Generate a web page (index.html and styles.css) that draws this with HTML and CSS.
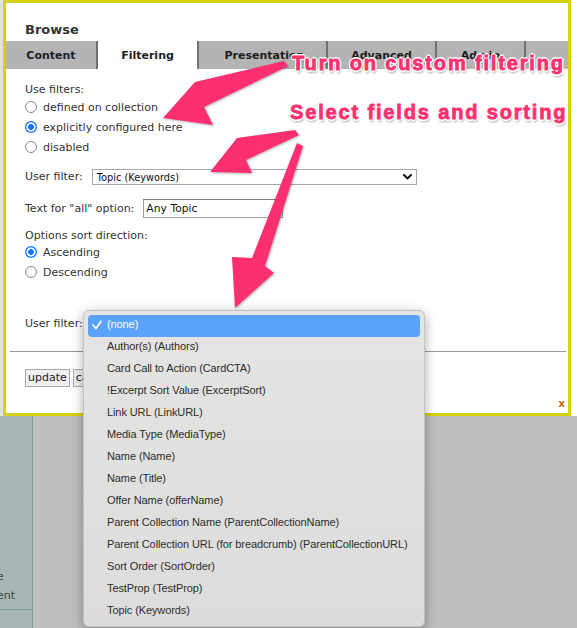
FILE: index.html
```html
<!DOCTYPE html>
<html lang="en">
<head>
<meta charset="utf-8">
<title>Browse – Filtering</title>
<link rel="stylesheet" href="styles.css">
</head>
<body>
<div class="page">
  <aside class="sidebar">
    <ul class="nav">
      <li>e</li>
      <li>ent</li>
    </ul>
    <div class="nav-foot"></div>
  </aside>
  <main class="backdrop"></main>
</div>

<div class="modal">
  <div class="dialog">
    <h1 class="title">Browse</h1>
    <div class="tabs">
      <div class="tab tab-content">Content</div>
      <div class="tab tab-filtering active">Filtering</div>
      <div class="tab tab-presentation">Presentation</div>
      <div class="tab tab-advanced">Advanced</div>
      <div class="tab tab-admin">Admin</div>
    </div>
    <div class="panel">
      <div class="label label-use">Use filters:</div>
      <div class="opt"><span class="radio"></span>defined on collection</div>
      <div class="opt"><span class="radio checked"></span>explicitly configured here</div>
      <div class="opt"><span class="radio"></span>disabled</div>

      <div class="field field-filter">
        <span class="field-label">User filter:</span>
        <div class="select select-wide">
          <span>Topic (Keywords)</span>
          <svg class="chev" width="9" height="6" viewBox="0 0 9 6"><polyline points="1,1 4.5,4.5 8,1" fill="none" stroke="#111" stroke-width="2" stroke-linecap="round" stroke-linejoin="round"/></svg>
        </div>
      </div>

      <div class="field field-all">
        <span class="field-label">Text for "all" option:</span>
        <div class="input">Any Topic</div>
      </div>

      <div class="label label-sort">Options sort direction:</div>
      <div class="opt"><span class="radio checked"></span>Ascending</div>
      <div class="opt"><span class="radio"></span>Descending</div>

      <div class="field field-filter2">
        <span class="field-label">User filter:</span>
        <div class="select select-wide"><span>(none)</span></div>
      </div>
    </div>
    <div class="rule"></div>
    <div class="buttons">
      <button class="btn">update</button>
      <button class="btn">cancel</button>
    </div>
    <div class="close">x</div>
  </div>
</div>

<div class="menu">
  <div class="item selected">
    <svg class="check" width="10" height="10" viewBox="0 0 10 10"><polyline points="1,5 4,8.5 9,1.5" fill="none" stroke="#fff" stroke-width="1.7" stroke-linecap="round" stroke-linejoin="round"/></svg>
    (none)
  </div>
  <div class="item">Author(s) (Authors)</div>
  <div class="item">Card Call to Action (CardCTA)</div>
  <div class="item">!Excerpt Sort Value (ExcerptSort)</div>
  <div class="item">Link URL (LinkURL)</div>
  <div class="item">Media Type (MediaType)</div>
  <div class="item">Name (Name)</div>
  <div class="item">Name (Title)</div>
  <div class="item">Offer Name (offerName)</div>
  <div class="item">Parent Collection Name (ParentCollectionName)</div>
  <div class="item">Parent Collection URL (for breadcrumb) (ParentCollectionURL)</div>
  <div class="item">Sort Order (SortOrder)</div>
  <div class="item">TestProp (TestProp)</div>
  <div class="item">Topic (Keywords)</div>
</div>

<svg class="arrows" width="577" height="628" viewBox="0 0 577 628">
  <polygon class="arrow" points="284,61 288,66 204,107 213,125 163,118 195,82"/>
  <polygon class="arrow" points="295,130 299,135 246,160 252,173 210,172 237,138"/>
  <polygon class="arrow" points="297,143 303,146 265,266 274,273 235,308 232,257 252,258"/>
</svg>

<div class="note note-1">Turn on custom filtering</div>
<div class="note note-2">Select fields and sorting</div>
</body>
</html>
```

FILE: styles.css
```css
* { box-sizing: border-box; }

html, body {
  margin: 0;
  padding: 0;
}

body {
  width: 577px;
  height: 628px;
  overflow: hidden;
  position: relative;
  font-family: "DejaVu Sans", Verdana, sans-serif;
  color: #333;
  background: #bebebe;
}

/* background page */
.page {
  display: grid;
  grid-template-columns: 33px 1fr;
  height: 628px;
}

.sidebar {
  display: flex;
  flex-direction: column;
  justify-content: flex-end;
  background: linear-gradient(#dde3e3 0, #dde3e3 416px, #a9b6b6 416px);
  border-right: 1px solid #7c9d9d;
  overflow: hidden;
}

.nav {
  list-style: none;
  margin: 0;
  padding: 0;
}

.nav li {
  font-size: 11px;
  line-height: 19px;
  color: #3c4343;
  margin-left: -3px;
  white-space: nowrap;
}

.nav-foot {
  margin-top: 4px;
  height: 19px;
  border-top: 1px solid #7c9d9d;
}

.backdrop {
  background: #bebebe;
}

/* modal dialog */
.modal {
  position: absolute;
  top: 0;
  left: 3px;
  right: 0;
  height: 416px;
  background: #fff;
}

.dialog {
  width: 568px;
  height: 416px;
  border: 3px solid #d7d10b;
  background: #fff;
  display: flex;
  flex-direction: column;
}

.title {
  margin: 0;
  padding: 19px 0 3px 19px;
  font-size: 13px;
  line-height: 16px;
  font-weight: bold;
  color: #333;
}

.tabs {
  display: flex;
  height: 28px;
  background: #b4b4b4;
}

.tab {
  height: 28px;
  padding-top: 1px;
  line-height: 27px;
  text-align: center;
  font-size: 11px;
  font-weight: bold;
  color: #1e1e1e;
  border-right: 2px solid #707070;
  white-space: nowrap;
  overflow: hidden;
}

.tab.active { background: #fff; }
.tab-content { width: 92px; }
.tab-filtering { width: 101px; }
.tab-presentation { width: 129px; padding-left: 4px; }
.tab-advanced { width: 109px; }
.tab-admin { width: 89px; }

.panel {
  padding: 14px 0 0 19px;
  font-size: 11px;
}

.label {
  line-height: 14px;
}

.label-sort {
  margin-top: 11px;
  line-height: 13px;
}

.opt {
  display: flex;
  align-items: center;
  height: 20px;
  gap: 6px;
}

.radio {
  width: 12px;
  height: 12px;
  border-radius: 50%;
  border: 1px solid #8a8a8a;
  background: #fff;
  flex: none;
}

.radio.checked {
  border: none;
  background: radial-gradient(circle, #1479f5 0, #1479f5 2.6px, #fff 3.2px, #fff 4.3px, #1479f5 4.9px);
}

.field {
  display: flex;
  align-items: center;
  gap: 9px;
}

.field-label {
  line-height: 16px;
  white-space: nowrap;
}

.field-filter {
  margin-top: 12px;
  height: 16px;
}

.field-all {
  margin-top: 14px;
  height: 19px;
}

.field-filter2 {
  margin-top: 34px;
  height: 16px;
}

.select {
  display: flex;
  align-items: center;
  justify-content: space-between;
  height: 16px;
  padding: 0 4px;
  border: 1px solid #a7a7a7;
  background: #fff;
  font-size: 9.8px;
  color: #111;
}

.select-wide { width: 325px; }

.chev { display: block; }

.input {
  width: 140px;
  height: 19px;
  padding: 0 2px;
  border: 1px solid #a0a0a0;
  border-top-color: #7a7a7a;
  font-size: 10.8px;
  line-height: 17px;
  color: #111;
}

.rule {
  margin: 19px 2px 0 4px;
  border-top: 1px solid #999;
}

.buttons {
  display: flex;
  gap: 3px;
  margin-top: 17px;
  padding-left: 19px;
}

.btn {
  height: 18px;
  padding: 0 2px;
  margin: 0;
  border: 1px solid #a9a9a9;
  border-radius: 0;
  background: #efefef;
  font-family: "DejaVu Sans", Verdana, sans-serif;
  font-size: 11px;
  line-height: 16px;
  color: #222;
}

.close {
  margin-top: 12px;
  align-self: flex-end;
  padding-right: 3px;
  font-size: 10px;
  line-height: 10px;
  font-weight: bold;
  color: #d06400;
}

/* open select menu */
.menu {
  position: absolute;
  left: 83px;
  top: 310px;
  width: 342px;
  height: 317px;
  padding: 4px;
  border: 1px solid rgba(0, 0, 0, 0.13);
  border-radius: 6px;
  background: linear-gradient(#e4e4e2, #dcdcdc);
  box-shadow: 0 3px 12px rgba(0, 0, 0, 0.33);
  font-family: "Liberation Sans", Arial, sans-serif;
  font-size: 11px;
  letter-spacing: -0.1px;
  color: #2e2e2e;
}

.item {
  position: relative;
  height: 22px;
  line-height: 18px;
  padding-left: 19px;
  white-space: nowrap;
}

.item.selected {
  background: #5aa2fb;
  border-radius: 4px;
  color: #fff;
}

.check {
  position: absolute;
  left: 4px;
  top: 5px;
}

/* annotations */
.arrows {
  position: absolute;
  left: 0;
  top: 0;
  pointer-events: none;
}

.arrow {
  fill: #fc3070;
  filter: drop-shadow(1px 1.5px 1.2px rgba(0, 0, 0, 0.3));
}

.note {
  position: absolute;
  font-family: "Liberation Sans", Arial, sans-serif;
  font-weight: bold;
  font-size: 20px;
  line-height: 22px;
  letter-spacing: 1.85px;
  color: #fc3070;
  -webkit-text-stroke: 0.8px #fc3070;
  white-space: nowrap;
  text-shadow:
    1.6px 0 0 #fff, -1.6px 0 0 #fff, 0 1.6px 0 #fff, 0 -1.6px 0 #fff,
    1.2px 1.2px 0 #fff, -1.2px -1.2px 0 #fff, 1.2px -1.2px 0 #fff, -1.2px 1.2px 0 #fff,
    1px 2.5px 2.5px rgba(0, 0, 0, 0.35);
}

.note-1 { left: 292px; top: 52px; }
.note-2 { left: 290px; top: 101px; }
```
